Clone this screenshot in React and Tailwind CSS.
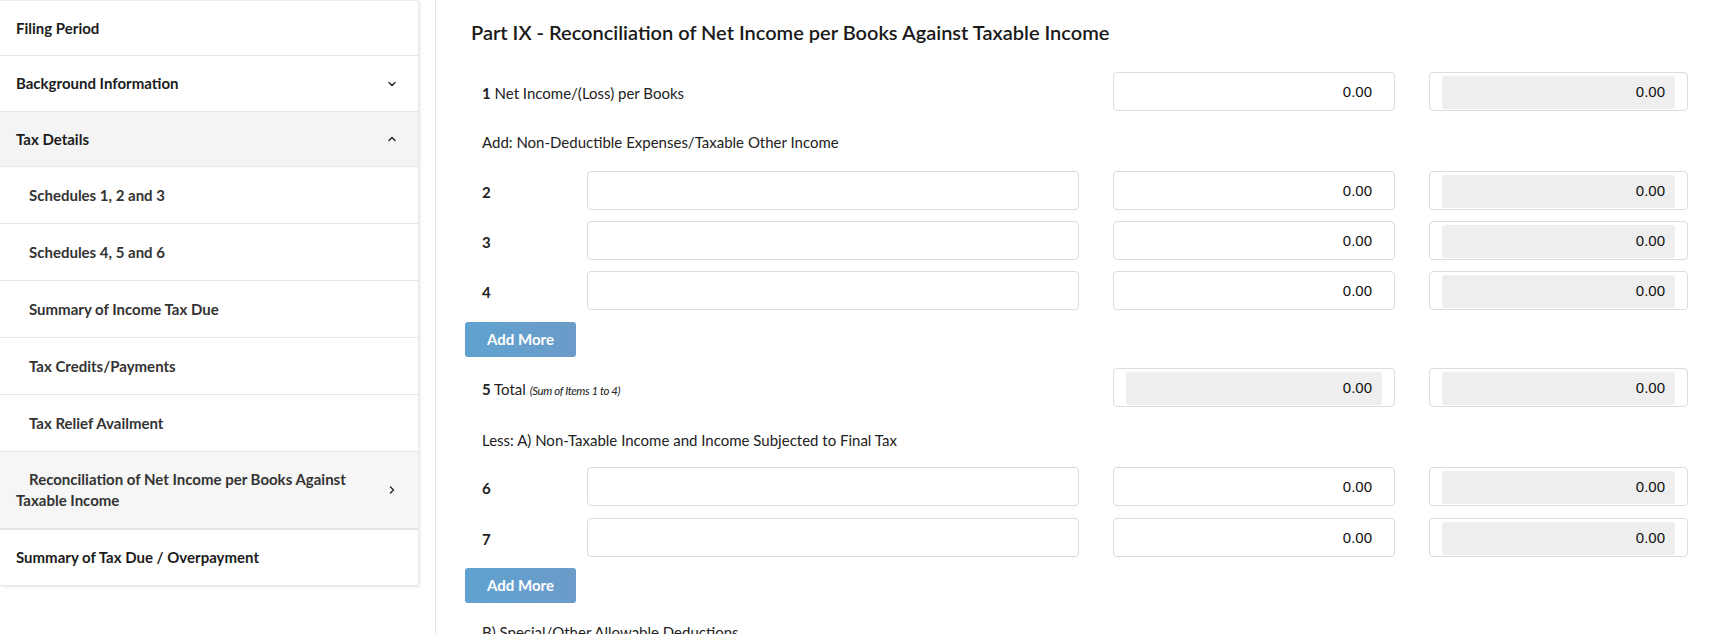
import React from 'react';

const Chevron = ({ dir = 'down' }) => {
  const d = {
    down: 'M1 1.5 L4 4.5 L7 1.5',
    up: 'M1 4.5 L4 1.5 L7 4.5',
    right: 'M2.5 1 L5.5 4 L2.5 7',
  }[dir];
  const vb = dir === 'right' ? '0 0 8 8' : '0 0 8 6';
  return (
    <svg width="8" height={dir === 'right' ? 8 : 6} viewBox={vb} fill="none" stroke="#222" strokeWidth="1.4" strokeLinecap="round" strokeLinejoin="round">
      <path d={d} />
    </svg>
  );
};

const NavItem = ({ label, h, chevron, active }) => (
  <div className={`flex items-center justify-between pl-[16px] pr-[22px] border-b border-[#e6e6e6] ${h} ${active ? 'bg-[#f4f4f4]' : 'bg-white'}`}>
    <span className="text-[15px] font-bold text-[#1c1c1c]">{label}</span>
    {chevron && <Chevron dir={chevron} />}
  </div>
);

const SubItem = ({ label }) => (
  <div className="flex items-center h-[57px] pl-[29px] border-b border-[#e6e6e6] bg-white">
    <span className="text-[15px] font-bold text-[#333]">{label}</span>
  </div>
);

const Amount = ({ gray }) => (
  <div className="h-[39px] border border-[#dcdcdc] rounded-[4px] px-[12px] pt-[3px] pb-[1px] bg-white">
    <div className={`h-full rounded-[3px] flex items-center justify-end pr-[10px] text-[15px] text-[#111] font-['Liberation_Sans',Arial,sans-serif] ${gray ? 'bg-[#eeeeee]' : 'bg-white'}`}>
      0.00
    </div>
  </div>
);

const TextBox = () => (
  <div className="h-[39px] border border-[#dcdcdc] rounded-[4px] bg-white" />
);

const LineRow = ({ num }) => (
  <div className="grid grid-cols-[88px_492px_282px_259px] gap-x-[34px] items-center">
    <span className="pl-[17px] pt-[4px] text-[15px] font-bold text-[#222]">{num}</span>
    <TextBox />
    <Amount />
    <Amount gray />
  </div>
);

const AddMore = ({ className }) => (
  <button className={`w-[111px] h-[35px] rounded-[3px] bg-gradient-to-r from-[#5fa2d0] to-[#6b9bc9] text-white text-[15px] font-bold ${className}`}>
    Add More
  </button>
);

export default function App() {
  return (
    <div className="flex w-[1713px] h-[634px] overflow-hidden bg-white font-['Lato','Noto_Sans',sans-serif]">
      <aside className="w-[418px] shrink-0 self-start border-t border-[#ececec] shadow-[2px_1px_3px_rgba(0,0,0,0.10)]">
        <NavItem label="Filing Period" h="h-[55px]" />
        <NavItem label="Background Information" h="h-[56px]" chevron="down" />
        <NavItem label="Tax Details" h="h-[55px]" chevron="up" active />
        <SubItem label="Schedules 1, 2 and 3" />
        <SubItem label="Schedules 4, 5 and 6" />
        <SubItem label="Summary of Income Tax Due" />
        <SubItem label="Tax Credits/Payments" />
        <SubItem label="Tax Relief Availment" />
        <div className="flex items-center justify-between h-[78px] pl-[16px] pr-[22px] bg-[#f6f6f6] border-b-2 border-[#e4e4e4]">
          <span className="text-[15px] font-bold text-[#333] leading-[21px] indent-[13px] w-[350px]">
            Reconciliation of Net Income per Books Against Taxable Income
          </span>
          <Chevron dir="right" />
        </div>
        <NavItem label="Summary of Tax Due / Overpayment" h="h-[56px]" />
      </aside>

      <div className="w-[17px] shrink-0" />

      <main className="flex-1 border-l border-[#e8e8e8] pl-[29px] pr-[25px] pt-[20px] text-[#222]">
        <h1 className="pl-[6px] text-[20px] leading-[24px] font-semibold text-[#1a1a1a]">
          Part IX - Reconciliation of Net Income per Books Against Taxable Income
        </h1>

        <div className="mt-[28px] grid grid-cols-[88px_492px_282px_259px] gap-x-[34px] items-center">
          <span className="col-span-2 pl-[17px] pt-[3px] text-[15px]">
            <b>1</b> Net Income/(Loss) per Books
          </span>
          <Amount />
          <Amount gray />
        </div>

        <p className="mt-[21px] pl-[17px] text-[15px] leading-[20px]">
          Add: Non-Deductible Expenses/Taxable Other Income
        </p>

        <div className="mt-[19px] flex flex-col gap-[11px]">
          <LineRow num="2" />
          <LineRow num="3" />
          <LineRow num="4" />
        </div>

        <AddMore className="mt-[12px] block" />

        <div className="mt-[11px] grid grid-cols-[88px_492px_282px_259px] gap-x-[34px] items-center">
          <span className="col-span-2 pl-[17px] pt-[3px] text-[15px]">
            <b>5</b> Total <i className="text-[11.5px] tracking-[-0.4px]">(Sum of Items 1 to 4)</i>
          </span>
          <Amount gray />
          <Amount gray />
        </div>

        <p className="mt-[23px] pl-[17px] text-[15px] leading-[20px]">
          Less: A) Non-Taxable Income and Income Subjected to Final Tax
        </p>

        <div className="mt-[17px] flex flex-col gap-[12px]">
          <LineRow num="6" />
          <LineRow num="7" />
        </div>

        <AddMore className="mt-[11px] block" />

        <p className="mt-[19px] pl-[17px] text-[15px] leading-[20px]">
          B) Special/Other Allowable Deductions
        </p>
      </main>
    </div>
  );
}
